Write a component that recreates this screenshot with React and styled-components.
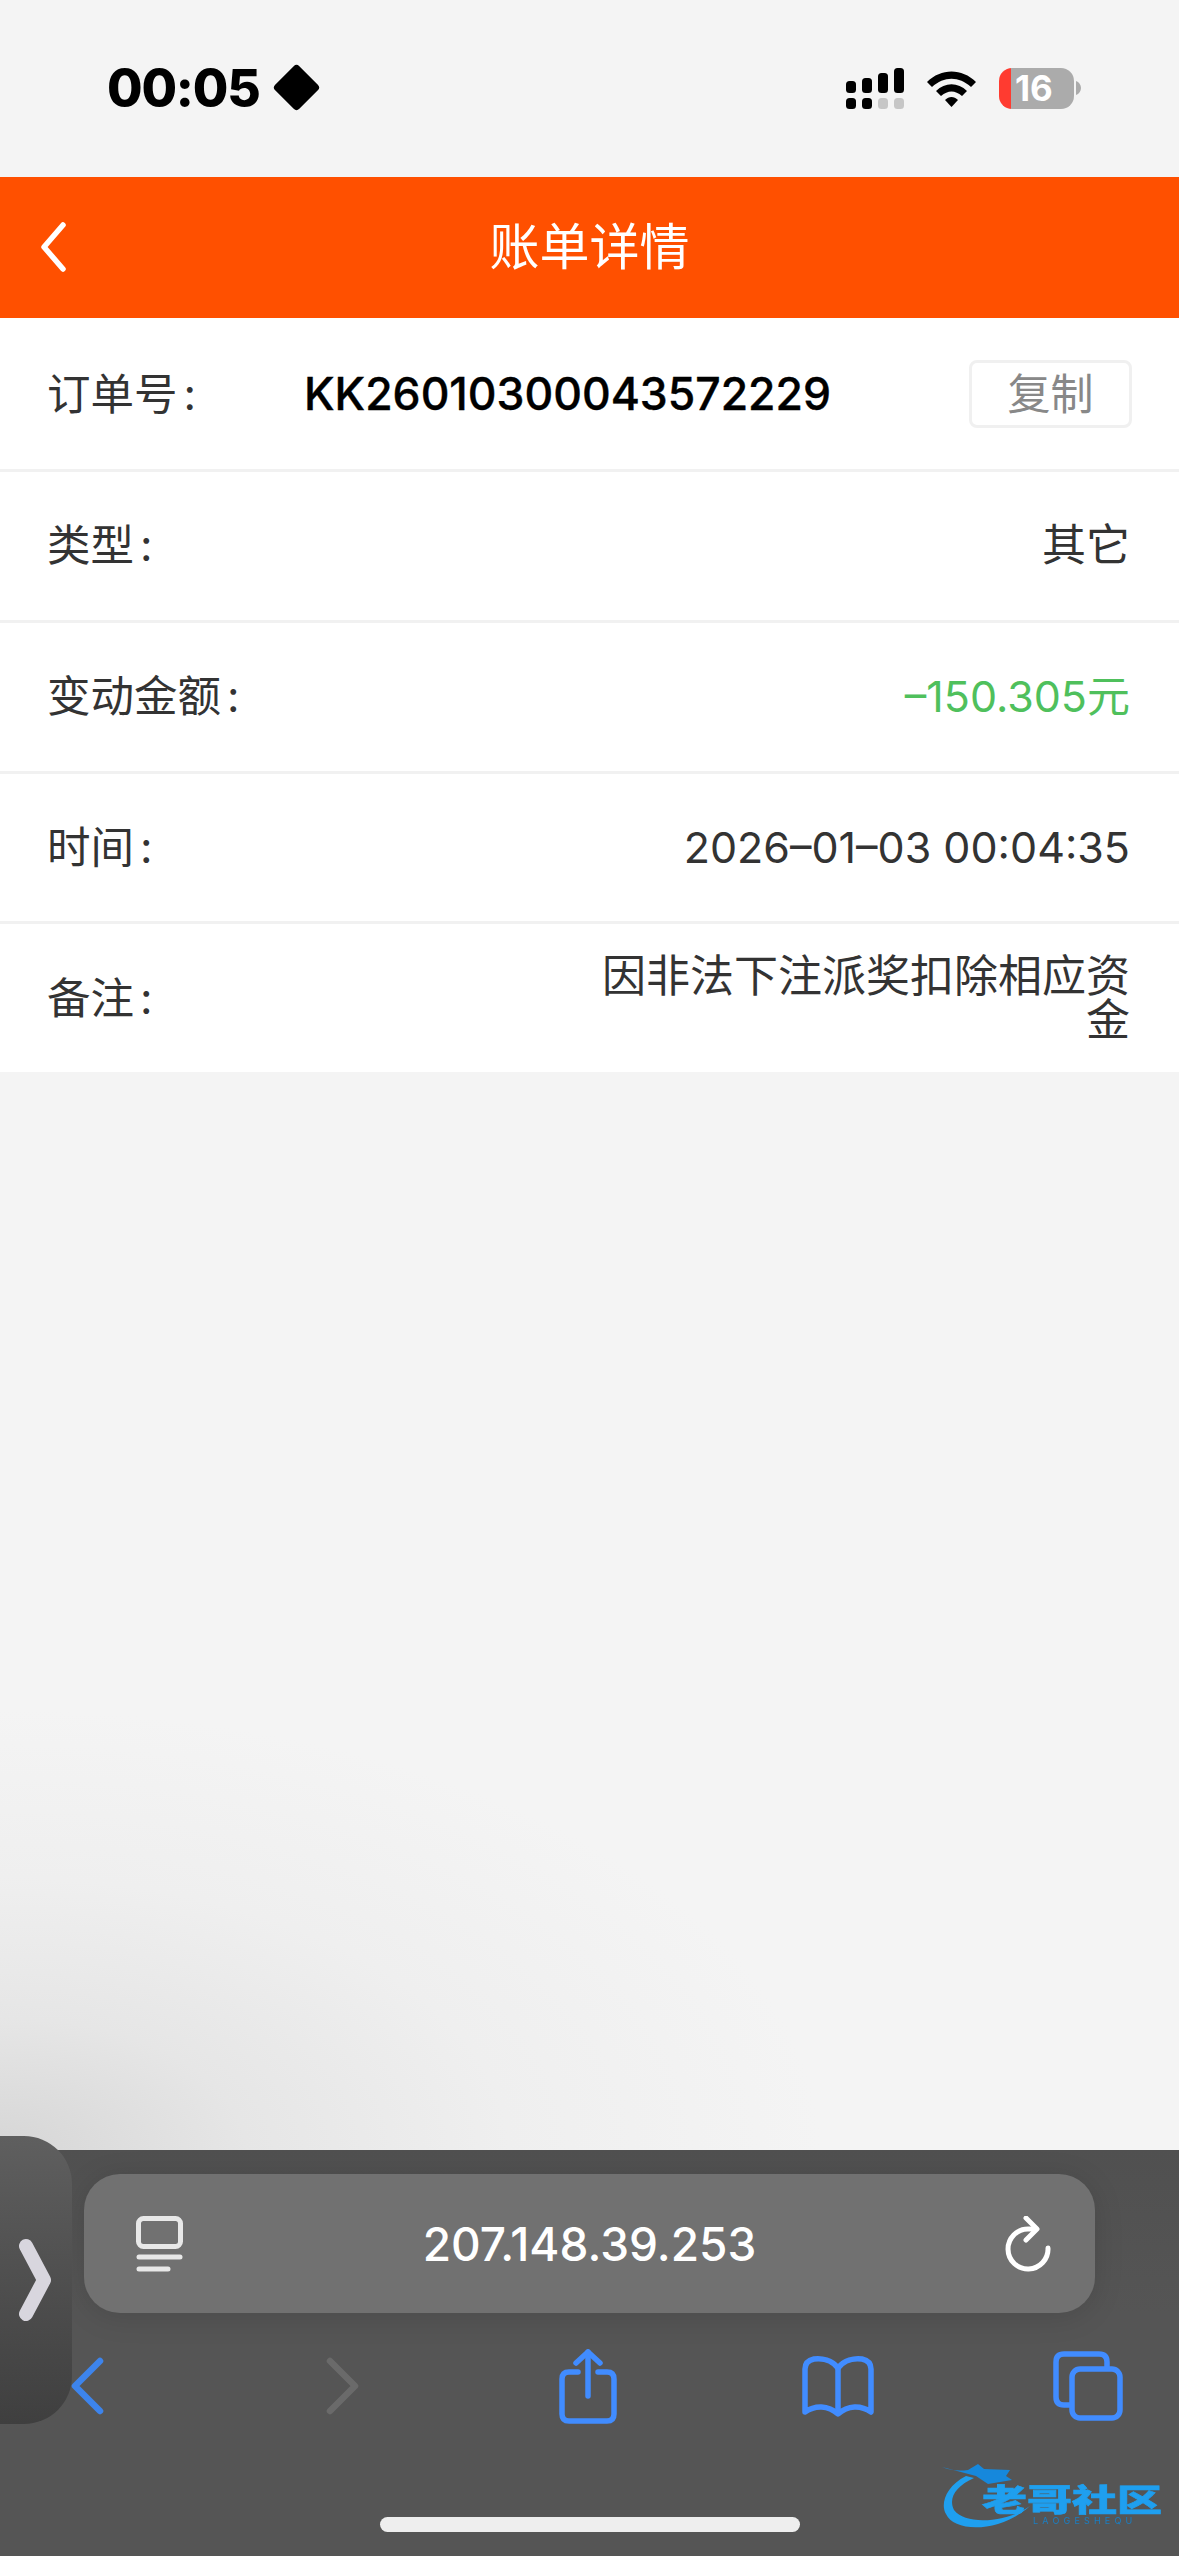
import React from 'react';
import styled, { createGlobalStyle } from 'styled-components';

const GlobalStyle = createGlobalStyle`
  html, body {
    margin: 0;
    padding: 0;
    background: #f4f4f4;
  }
  * {
    box-sizing: border-box;
  }
`;

const FONT = `Inter, "Noto Sans CJK SC", sans-serif`;

const Page = styled.div`
  width: 1179px;
  height: 2556px;
  display: flex;
  flex-direction: column;
  position: relative;
  overflow: hidden;
  background: #f4f4f4;
  font-family: ${FONT};
`;

const StatusBar = styled.div`
  height: 177px;
  flex: none;
  display: flex;
  justify-content: space-between;
  align-items: flex-start;
  padding: 64px 98px 0 107px;
  background: #f4f4f4;
`;

const TimeGroup = styled.div`
  display: flex;
  align-items: center;
  gap: 13px;
  height: 47px;
`;

const Time = styled.span`
  font-size: 51.5px;
  line-height: 47px;
  font-weight: 800;
  color: #000;
  letter-spacing: -1.2px;
`;

const StatusIcons = styled.div`
  display: flex;
  align-items: center;
  height: 44px;
  margin-top: 2px;
`;

const Wifi = styled.svg`
  margin-left: 22px;
`;

const Battery = styled.div`
  width: 75px;
  height: 41px;
  margin-left: 22px;
  border-radius: 13px;
  background: linear-gradient(to right, #ff3b30 0 12px, #ababab 12px);
  color: #fff;
  font-size: 35px;
  font-weight: 700;
  line-height: 41px;
  padding-left: 16px;
`;

const BatteryCap = styled.svg`
  margin-left: 2px;
`;

const Header = styled.header`
  height: 141px;
  flex: none;
  display: flex;
  align-items: center;
  justify-content: center;
  position: relative;
  background: #ff5000;
`;

const BackIcon = styled.svg`
  position: absolute;
  left: 38px;
  top: 44px;
`;

const Title = styled.h1`
  margin: 0 0 2px;
  color: #fff;
  font-size: 50px;
  font-weight: 400;
  line-height: 60px;
`;

const List = styled.div`
  flex: none;
  background: #fff;
`;

const Row = styled.div`
  height: 151px;
  display: flex;
  align-items: center;
  justify-content: space-between;
  padding: 0 49px 2px 47px;
  border-bottom: 3px solid #f1f1f1;

  &:first-child {
    height: 154px;
    padding-bottom: 0;
  }
  &:nth-child(4) {
    height: 150px;
  }
  &:last-child {
    height: 148px;
    padding-bottom: 0;
    border-bottom: none;
  }
`;

const Label = styled.span`
  color: #333;
  font-size: 43.5px;
  line-height: 44px;
  flex: none;
  width: ${(p) => (p.$wide ? '257px' : 'auto')};
`;

const Colon = styled.span`
  margin-left: 6px;
`;

const OrderNo = styled.span`
  color: #000;
  font-size: 44.5px;
  font-weight: 500;
  line-height: 44px;
  -webkit-text-stroke: 0.4px #000;
`;

const CopyButton = styled.button`
  margin-left: auto;
  width: 163px;
  height: 68px;
  margin-right: -2px;
  padding: 0;
  border: 3px solid #f0f0f0;
  border-radius: 8px;
  background: #fff;
  color: #888;
  font-family: ${FONT};
  font-size: 43px;
  line-height: 60px;
`;

const Value = styled.span`
  max-width: 530px;
  text-align: right;
  color: ${(p) => p.$color || '#333'};
  font-size: ${(p) => p.$size || 44}px;
  line-height: 44px;
  word-break: break-all;
`;

const Blank = styled.div`
  flex: 1;
  background: radial-gradient(ellipse 820px 440px at 0% 100%, #d6d6d6 0%, #e6e6e6 30%, #efefef 62%, #f4f4f4 100%);
`;

const Toolbar = styled.div`
  height: 406px;
  flex: none;
  display: flex;
  flex-direction: column;
  padding-top: 24px;
  background: linear-gradient(to bottom, #505050, #555 40%);
`;

const UrlBar = styled.div`
  height: 139px;
  margin: 0 84px;
  display: flex;
  align-items: center;
  padding: 0 43px 0 52px;
  border-radius: 36px;
  background: #717171;
  box-shadow: 0 4px 30px rgba(0, 0, 0, 0.12);
`;

const UrlText = styled.span`
  flex: 1;
  padding-right: 9px;
  text-align: center;
  color: #fff;
  font-size: 46px;
  font-weight: 500;
  line-height: 56px;
`;

const NavRow = styled.div`
  display: flex;
  justify-content: space-between;
  align-items: center;
  height: 80px;
  margin-top: 33px;
  padding: 0 54px 0 50px;
`;

const NavSlot = styled.div`
  width: 74px;
  display: flex;
  justify-content: center;
`;

const SideTab = styled.div`
  position: absolute;
  left: 0;
  top: 2136px;
  width: 72px;
  height: 288px;
  display: flex;
  align-items: center;
  padding-left: 18px;
  border-radius: 0 48px 48px 0;
  background: linear-gradient(to bottom, #5f5f5f, #3f3f3f);
`;

const HomeBar = styled.div`
  position: absolute;
  left: 380px;
  top: 2517px;
  width: 420px;
  height: 15px;
  border-radius: 8px;
  background: #eee;
`;

const Watermark = styled.div`
  position: absolute;
  left: 938px;
  top: 2462px;
  width: 232px;
  height: 76px;
  filter: blur(0.7px);
`;

const WatermarkArt = styled.svg`
  position: absolute;
  left: 0;
  top: 0;
`;

const WatermarkName = styled.div`
  position: absolute;
  left: 44px;
  top: 14px;
  width: 184px;
  color: #1f9fef;
  font-family: "Noto Sans CJK SC", sans-serif;
  font-size: 45px;
  font-weight: 900;
  line-height: 44px;
  white-space: nowrap;
  -webkit-text-stroke: 1px #1f9fef;
  transform: scaleY(0.68);
`;

const WatermarkSub = styled.div`
  position: absolute;
  left: 95px;
  top: 55px;
  color: #1a7fc4;
  font-family: ${FONT};
  font-size: 9px;
  line-height: 8px;
  letter-spacing: 4.2px;
  white-space: nowrap;
`;

const rows = [
  { label: '类型', value: '其它' },
  { label: '变动金额', value: '–150.305元', color: '#4fc05c', size: 43 },
  { label: '时间', value: '2026–01–03 00:04:35', size: 43 },
  { label: '备注', value: '因非法下注派奖扣除相应资金' },
];

function SignalIcon() {
  const tops = [13, 10, 5, 0];
  const lows = ['#000', '#000', '#c6c6c6', '#c6c6c6'];
  return (
    <svg width="58" height="41" viewBox="0 0 58 41">
      {tops.map((t, i) => (
        <rect key={i} x={i * 16} y={t} width="10" height={25 - t} rx="3.5" fill="#000" />
      ))}
      {lows.map((c, i) => (
        <rect key={i} x={i * 16} y="30" width="10" height="11" rx="3.5" fill={c} />
      ))}
    </svg>
  );
}

const Blue = '#418cff';

export default function App() {
  return (
    <Page>
      <GlobalStyle />
      <StatusBar>
        <TimeGroup>
          <Time>00:05</Time>
          <svg width="47" height="47" viewBox="0 0 47 47">
            <path d="M23.500 5 L42 23.500 L23.500 42 L5 23.500 Z" fill="#000" stroke="#000" strokeWidth="8" strokeLinejoin="round" />
          </svg>
        </TimeGroup>
        <StatusIcons>
          <SignalIcon />
          <Wifi width="51" height="38" viewBox="0 0 51 38">
            <path d="M1 13 C15 -1 36 -1 50 13 L45 18 C33 7 18 7 6 18 Z" fill="#000" />
            <path d="M10 22 C19 13 32 13 41 22 L36 27 C29 21 22 21 15 27 Z" fill="#000" />
            <path d="M19 31 C23 27 28 27 32 31 L25.500 38 Z" fill="#000" />
          </Wifi>
          <Battery>16</Battery>
          <BatteryCap width="5" height="14" viewBox="0 0 5 14">
            <path d="M0 0 C3 1 5 4 5 7 C5 10 3 13 0 14 Z" fill="#ababab" />
          </BatteryCap>
        </StatusIcons>
      </StatusBar>

      <Header>
        <BackIcon width="30" height="52" viewBox="0 0 30 52">
          <path d="M25 4 L6 26 L25 48" fill="none" stroke="#fff" strokeWidth="5.500" strokeLinecap="round" strokeLinejoin="round" />
        </BackIcon>
        <Title>账单详情</Title>
      </Header>

      <List>
        <Row>
          <Label $wide>订单号<Colon>:</Colon></Label>
          <OrderNo>KK26010300043572229</OrderNo>
          <CopyButton>复制</CopyButton>
        </Row>
        {rows.map((r) => (
          <Row key={r.label}>
            <Label>{r.label}<Colon>:</Colon></Label>
            <Value $color={r.color} $size={r.size}>{r.value}</Value>
          </Row>
        ))}
      </List>

      <Blank />

      <Toolbar>
        <UrlBar>
          <svg width="47" height="56" viewBox="0 0 47 56">
            <rect x="2.500" y="2.500" width="42" height="28" rx="5" fill="none" stroke="#e8e8e8" strokeWidth="5" />
            <path d="M3 41 H44" stroke="#e8e8e8" strokeWidth="5" strokeLinecap="round" />
            <path d="M3 53 H32" stroke="#e8e8e8" strokeWidth="5" strokeLinecap="round" />
          </svg>
          <UrlText>207.148.39.253</UrlText>
          <svg width="47" height="56" viewBox="0 0 47 56">
            <path d="M43 32 A20 20 0 1 1 23 13 H27" fill="none" stroke="#fff" strokeWidth="5" strokeLinecap="round" />
            <path d="M21 2 L32 13 L21 24" fill="none" stroke="#fff" strokeWidth="5" strokeLinecap="round" strokeLinejoin="round" />
          </svg>
        </UrlBar>

        <NavRow>
          <NavSlot>
            <svg width="34" height="58" viewBox="0 0 34 58">
              <path d="M30 4 L5 29 L30 54" fill="none" stroke="#3d84ec" strokeWidth="6.500" strokeLinecap="round" strokeLinejoin="round" />
            </svg>
          </NavSlot>
          <NavSlot>
            <svg width="46" height="58" viewBox="0 0 46 58">
              <path d="M16 4 L41 29 L16 54" fill="none" stroke="#6a6a6a" strokeWidth="6.500" strokeLinecap="round" strokeLinejoin="round" />
            </svg>
          </NavSlot>
          <NavSlot>
            <svg width="58" height="75" viewBox="0 0 58 75">
              <path d="M19 23 H10 Q3 23 3 30 V65 Q3 72 10 72 H48 Q55 72 55 65 V30 Q55 23 48 23 H39" fill="none" stroke={Blue} strokeWidth="5.500" strokeLinecap="round" />
              <path d="M29 47 V3" fill="none" stroke={Blue} strokeWidth="5.500" strokeLinecap="round" />
              <path d="M17 14 L29 3 L41 14" fill="none" stroke={Blue} strokeWidth="5.500" strokeLinecap="round" strokeLinejoin="round" />
            </svg>
          </NavSlot>
          <NavSlot>
            <svg width="72" height="62" viewBox="0 0 72 62">
              <path d="M36 13 C30 5 20 3 12 4 Q3 6 3 14 V57 C13 50 26 50 36 59 C46 50 59 50 69 57 V14 Q69 6 60 4 C52 3 42 5 36 13 Z" fill="none" stroke={Blue} strokeWidth="5.500" strokeLinejoin="round" strokeLinecap="round" />
              <path d="M36 13 V59" fill="none" stroke={Blue} strokeWidth="5.500" />
            </svg>
          </NavSlot>
          <NavSlot>
            <svg width="70" height="70" viewBox="0 0 70 70">
              <path d="M54 16 V11 Q54 3 46 3 H11 Q3 3 3 11 V46 Q3 54 11 54 H17" fill="none" stroke={Blue} strokeWidth="5.500" />
              <rect x="19" y="18" width="48" height="49" rx="8" fill="none" stroke={Blue} strokeWidth="5.500" />
            </svg>
          </NavSlot>
        </NavRow>
      </Toolbar>

      <SideTab>
        <svg width="34" height="84" viewBox="0 0 34 84">
          <path d="M8 8 L26 42 L8 76" fill="none" stroke="#d8d6de" strokeWidth="14" strokeLinecap="round" strokeLinejoin="round" />
        </svg>
      </SideTab>

      <HomeBar />

      <Watermark>
        <WatermarkArt width="100" height="76" viewBox="0 0 100 76">
          <path d="M28 14 C8 24 2 42 8 52 C16 70 60 72 92 44 C70 60 28 64 16 48 C10 36 18 24 36 16 Z" fill="#1f9fef" />
          <path d="M4 5 C14 9 22 9 30 8 L40 2 L46 7 L72 8 L68 14 L74 18 L50 22 L38 14 Z" fill="#1688dc" />
        </WatermarkArt>
        <WatermarkName>老哥社区</WatermarkName>
        <WatermarkSub>LAOGESHEQU</WatermarkSub>
      </Watermark>
    </Page>
  );
}
